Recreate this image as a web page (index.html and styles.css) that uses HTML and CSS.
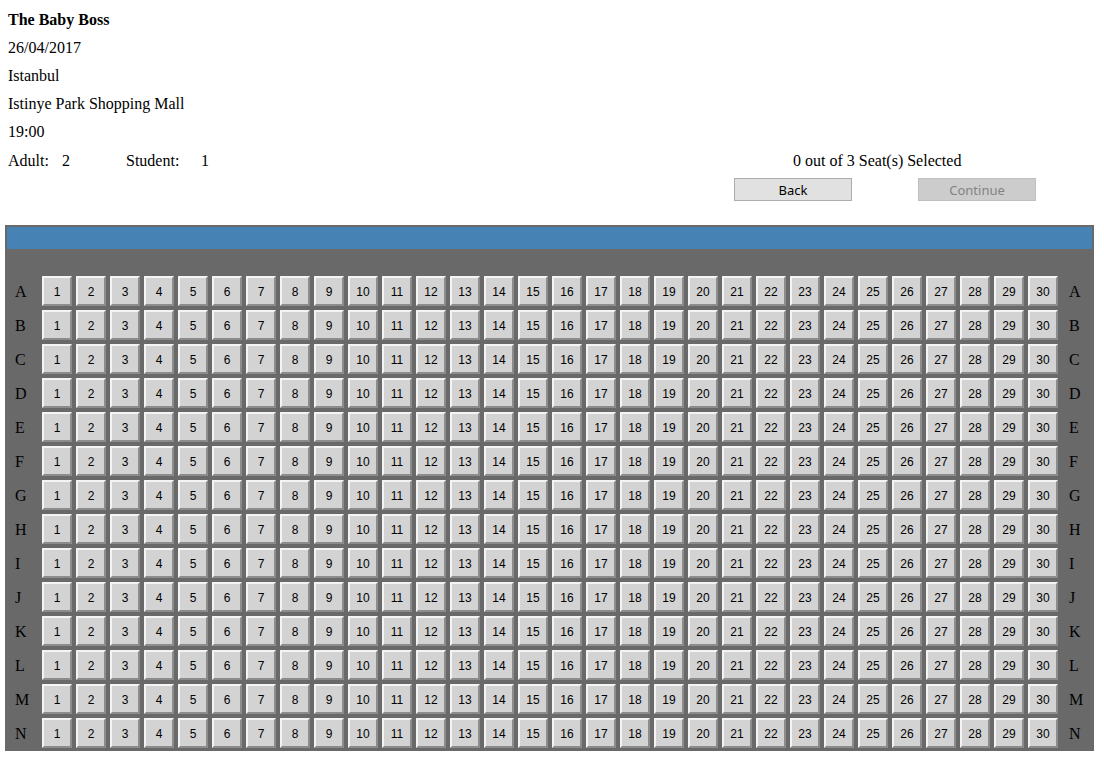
FILE: index.html
```html
<!DOCTYPE html>
<html>
<head>
<meta charset="utf-8">
<title>The Baby Boss - Seat Selection</title>
<link rel="stylesheet" href="styles.css">
</head>
<body>
<div class="info">
  <div class="line title">The Baby Boss</div>
  <div class="line">26/04/2017</div>
  <div class="line">Istanbul</div>
  <div class="line">Istinye Park Shopping Mall</div>
  <div class="line">19:00</div>
  <div class="bar">
    <div class="tickets">
      <span class="t-label adult">Adult:</span><span class="t-num adult-n">2</span>
      <span class="t-label student">Student:</span><span class="t-num">1</span>
    </div>
    <div class="summary">
      <div class="status">0 out of 3 Seat(s) Selected</div>
      <div class="actions">
        <button class="btn">Back</button>
        <button class="btn disabled" disabled>Continue</button>
      </div>
    </div>
  </div>
</div>
<div class="hall">
  <div class="screen"></div>
  <div class="seats" id="seats"></div>
</div>
<script src="script.js"></script>
</body>
</html>
```
FILE: script.js
```js
(function () {
  var rows = "ABCDEFGHIJKLMN".split("");
  var grid = document.getElementById("seats");
  var html = "";
  rows.forEach(function (r) {
    html += '<div class="row-label left">' + r + '</div>';
    for (var i = 1; i <= 30; i++) {
      html += '<button class="seat">' + i + '</button>';
    }
    html += '<div class="row-label right">' + r + '</div>';
  });
  grid.innerHTML = html;
})();
```
FILE: styles.css
```css
html, body {
  margin: 0;
  padding: 0;
  background: #ffffff;
}
body {
  font-family: "Liberation Serif", "Times New Roman", serif;
  font-size: 16px;
  color: #000;
}
.info {
  padding: 6px 0 0 8px;
}
.line {
  line-height: 28px;
  height: 28px;
}
.title {
  font-weight: bold;
}
.bar {
  display: grid;
  grid-template-columns: 726px 302px;
  margin-top: 1px;
}
.tickets {
  line-height: 28px;
  height: 28px;
  display: flex;
}
.t-label, .t-num {
  display: inline-block;
}
.adult { width: 54px; }
.adult-n { width: 64px; }
.student { width: 75px; }
.summary {
  display: flex;
  flex-direction: column;
}
.status {
  line-height: 28px;
  height: 28px;
  padding-left: 59px;
}
.actions {
  display: flex;
  gap: 66px;
  margin-top: 3px;
}
.btn {
  width: 118px;
  height: 23px;
  margin: 0;
  padding: 1px 0 0 0;
  box-sizing: border-box;
  border: 1px solid #adadad;
  background: #e1e1e1;
  color: #000;
  font-family: "Noto Sans", "Open Sans", sans-serif;
  font-size: 13px;
  line-height: 19px;
  border-radius: 0;
}
.btn.disabled {
  background: #cccccc;
  border-color: #bfbfbf;
  color: #838383;
}
.hall {
  margin: 24px 0 0 5px;
  width: 1089px;
  box-sizing: border-box;
  background: #696969;
  padding: 2px;
}
.screen {
  height: 22px;
  background: #4682b4;
}
.seats {
  display: grid;
  grid-template-columns: 31px repeat(30, 30px) 30px;
  column-gap: 4px;
  row-gap: 4px;
  padding: 27px 0 1px 0;
}
.row-label {
  height: 30px;
  line-height: 30px;
  padding-top: 1px;
  box-sizing: border-box;
  font-family: "Liberation Serif", "Times New Roman", serif;
  font-size: 16px;
  color: #000;
}
.row-label.left { padding-left: 8px; }
.row-label.right { padding-left: 7px; }
.seat {
  width: 30px;
  height: 30px;
  margin: 0;
  padding: 3px 0 0 0;
  box-sizing: border-box;
  background: #d3d3d3;
  border: 2px solid;
  border-color: #f4f4f4 #8c8c8c #8c8c8c #f4f4f4;
  border-radius: 0;
  font-family: "Liberation Sans", Arial, sans-serif;
  font-size: 12px;
  color: #000;
  line-height: 23px;
  text-align: center;
}
```
